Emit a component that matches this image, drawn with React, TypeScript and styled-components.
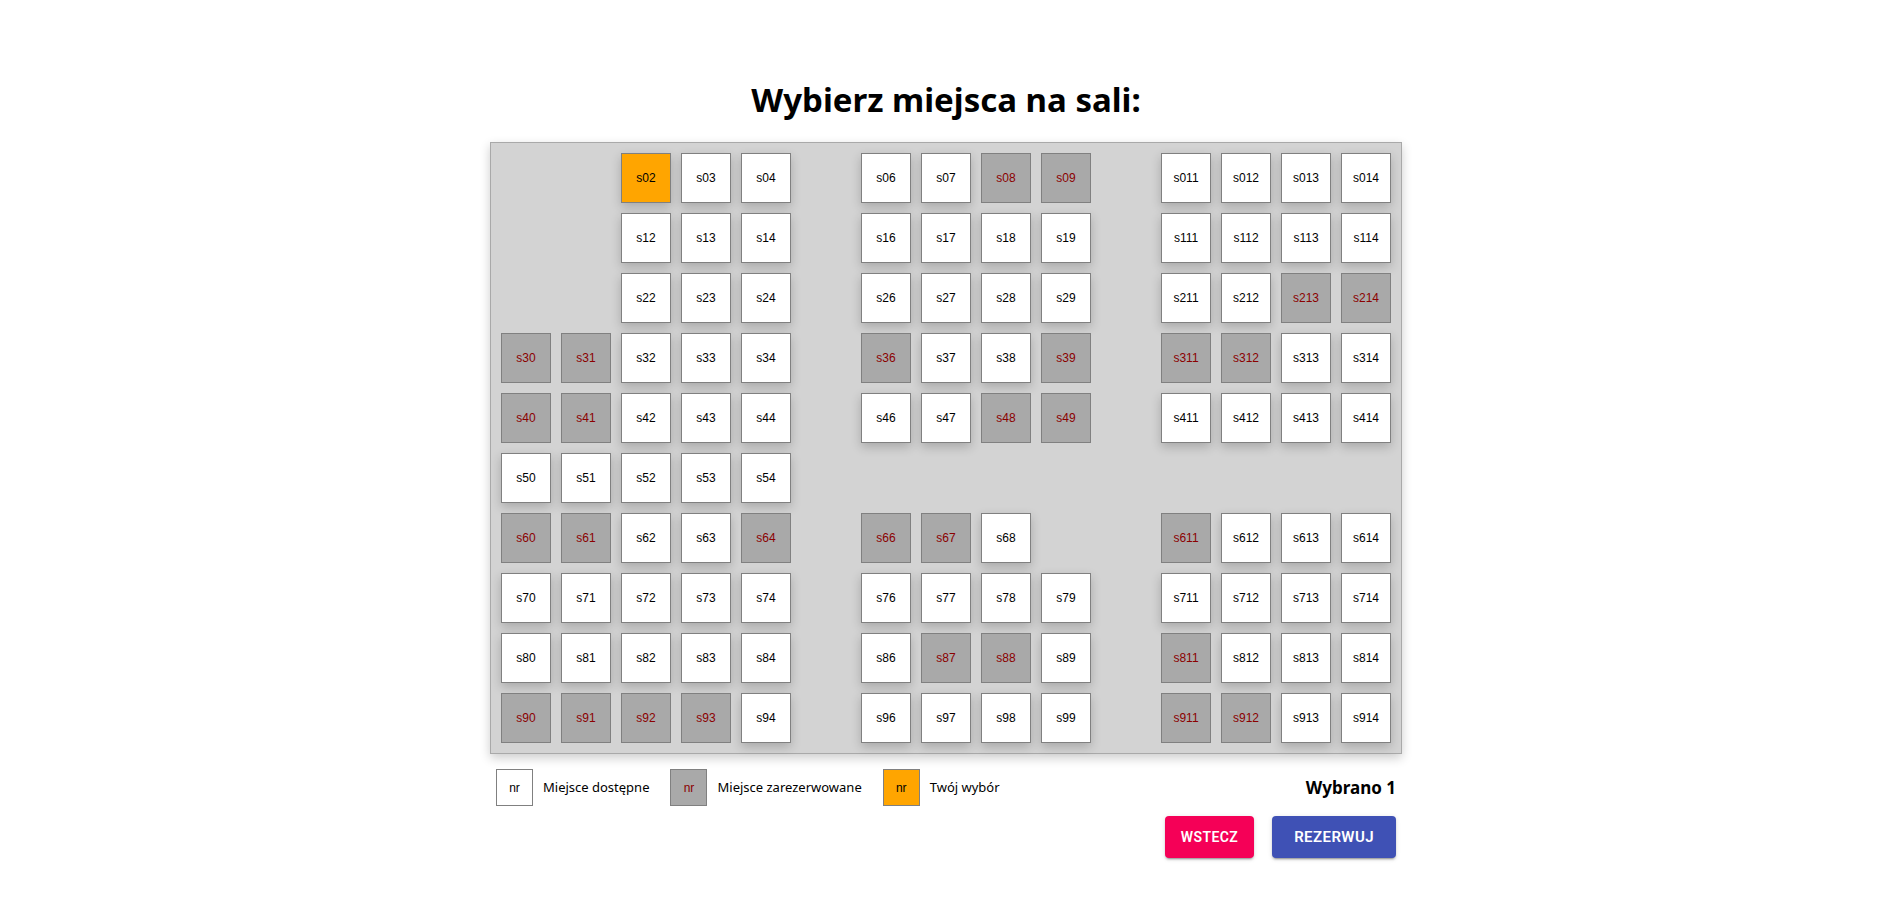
import React, { useState } from 'react';
import styled, { createGlobalStyle, css } from 'styled-components';

type SeatState = 'free' | 'reserved' | 'chosen';

const ROWS = 10;
const COLUMNS = 15;

const RESERVED = new Set([
  's08', 's09', 's213', 's214', 's30', 's31', 's36', 's39', 's311', 's312',
  's40', 's41', 's48', 's49', 's60', 's61', 's64', 's66', 's67', 's611',
  's87', 's88', 's811', 's90', 's91', 's92', 's93', 's911', 's912',
]);

const hasSeat = (row: number, column: number) => {
  if (column === 5 || column === 10) return false;
  if (row < 3 && column < 2) return false;
  if (row === 5 && column > 4) return false;
  return !(row === 6 && column === 9);
};

const seats = Array.from({ length: ROWS * COLUMNS }, (_, index) => ({
  row: Math.floor(index / COLUMNS),
  column: index % COLUMNS,
}))
  .filter(({ row, column }) => hasSeat(row, column))
  .map(({ row, column }) => ({ id: `s${row}${column}`, row, column }));

const GlobalStyle = createGlobalStyle`
  *, *::before, *::after { box-sizing: border-box; }
  body {
    margin: 0;
    background: #fff;
    color: #000;
    font-family: "Segoe UI", "Noto Sans", "Open Sans", sans-serif;
  }
`;

const Page = styled.main`
  display: flex;
  flex-direction: column;
  align-items: center;
  justify-content: center;
  min-height: 100vh;
  padding: 16px 0 0 4px;
`;

const Content = styled.div`
  display: flex;
  flex-direction: column;
`;

const Title = styled.h1`
  margin: 0 0 18px;
  font-size: 33px;
  line-height: 48px;
  font-weight: 700;
  text-align: center;
`;

const Hall = styled.div`
  display: grid;
  grid-template-columns: repeat(${COLUMNS}, 50px);
  grid-template-rows: repeat(${ROWS}, 50px);
  gap: 10px;
  padding: 10px;
  border: 1px solid darkgray;
  background: lightgray;
  box-shadow: 0 4px 10px rgba(0, 0, 0, 0.2);
`;

const fills = {
  free: css`background: white; color: black;`,
  reserved: css`background: darkgray; color: darkred;`,
  chosen: css`background: orange; color: black;`,
};

const Seat = styled.button<{ $state: SeatState; $row: number; $column: number }>`
  grid-row: ${(p) => p.$row + 1};
  grid-column: ${(p) => p.$column + 1};
  padding: 0;
  border: 1px solid gray;
  font: 12px "Liberation Sans", Arial, sans-serif;
  cursor: pointer;
  box-shadow: 0 4px 10px rgba(0, 0, 0, 0.2);
  ${(p) => fills[p.$state]}
  &:disabled {
    box-shadow: none;
    cursor: default;
  }
`;

const Footer = styled.div`
  display: flex;
  justify-content: space-between;
  padding: 15px 6px 0;
`;

const Legend = styled.ul`
  display: flex;
  gap: 21px;
  margin: 0;
  padding: 0;
  list-style: none;
`;

const LegendItem = styled.li`
  display: flex;
  align-items: center;
  height: 37px;
  gap: 10px;
  font-size: 13px;
`;

const Swatch = styled.span<{ $state: SeatState }>`
  display: grid;
  place-items: center;
  width: 37px;
  height: 37px;
  padding-top: 2px;
  border: 1px solid gray;
  font: 12px "Liberation Sans", Arial, sans-serif;
  ${(p) => fills[p.$state]}
`;

const Summary = styled.div`
  display: flex;
  flex-direction: column;
  align-items: flex-end;
  gap: 10px;
`;

const Count = styled.output`
  font-size: 17px;
  line-height: 37px;
  font-weight: 700;
`;

const Actions = styled.div`
  display: flex;
  gap: 18px;
`;

const Action = styled.button<{ $color: string; $large?: boolean }>`
  height: 42px;
  padding: 0 ${(p) => (p.$large ? 22 : 16)}px;
  border: 0;
  border-radius: 4px;
  background: ${(p) => p.$color};
  color: #fff;
  font: 600 ${(p) => (p.$large ? 15 : 14)}px Roboto, sans-serif;
  text-transform: uppercase;
  letter-spacing: 0.02857em;
  cursor: pointer;
  box-shadow: 0 3px 1px -2px rgba(0, 0, 0, 0.2), 0 2px 2px rgba(0, 0, 0, 0.14),
    0 1px 5px rgba(0, 0, 0, 0.12);
`;

const legend: { state: SeatState; label: string }[] = [
  { state: 'free', label: 'Miejsce dostępne' },
  { state: 'reserved', label: 'Miejsce zarezerwowane' },
  { state: 'chosen', label: 'Twój wybór' },
];

export default function App() {
  const [chosen, setChosen] = useState<string[]>(['s02']);

  const toggle = (id: string) =>
    setChosen((ids) => (ids.includes(id) ? ids.filter((other) => other !== id) : [...ids, id]));

  const stateOf = (id: string): SeatState =>
    RESERVED.has(id) ? 'reserved' : chosen.includes(id) ? 'chosen' : 'free';

  return (
    <Page>
      <GlobalStyle />
      <Content>
        <Title>Wybierz miejsca na sali:</Title>
        <Hall>
          {seats.map(({ id, row, column }) => (
            <Seat
              key={id}
              type="button"
              $row={row}
              $column={column}
              $state={stateOf(id)}
              disabled={RESERVED.has(id)}
              aria-pressed={chosen.includes(id)}
              onClick={() => toggle(id)}
            >
              {id}
            </Seat>
          ))}
        </Hall>
        <Footer>
          <Legend>
            {legend.map(({ state, label }) => (
              <LegendItem key={state}>
                <Swatch $state={state}>nr</Swatch>
                {label}
              </LegendItem>
            ))}
          </Legend>
          <Summary>
            <Count>Wybrano {chosen.length}</Count>
            <Actions>
              <Action type="button" $color="#f50057">Wstecz</Action>
              <Action type="button" $color="#3f51b5" $large>Rezerwuj</Action>
            </Actions>
          </Summary>
        </Footer>
      </Content>
    </Page>
  );
}
